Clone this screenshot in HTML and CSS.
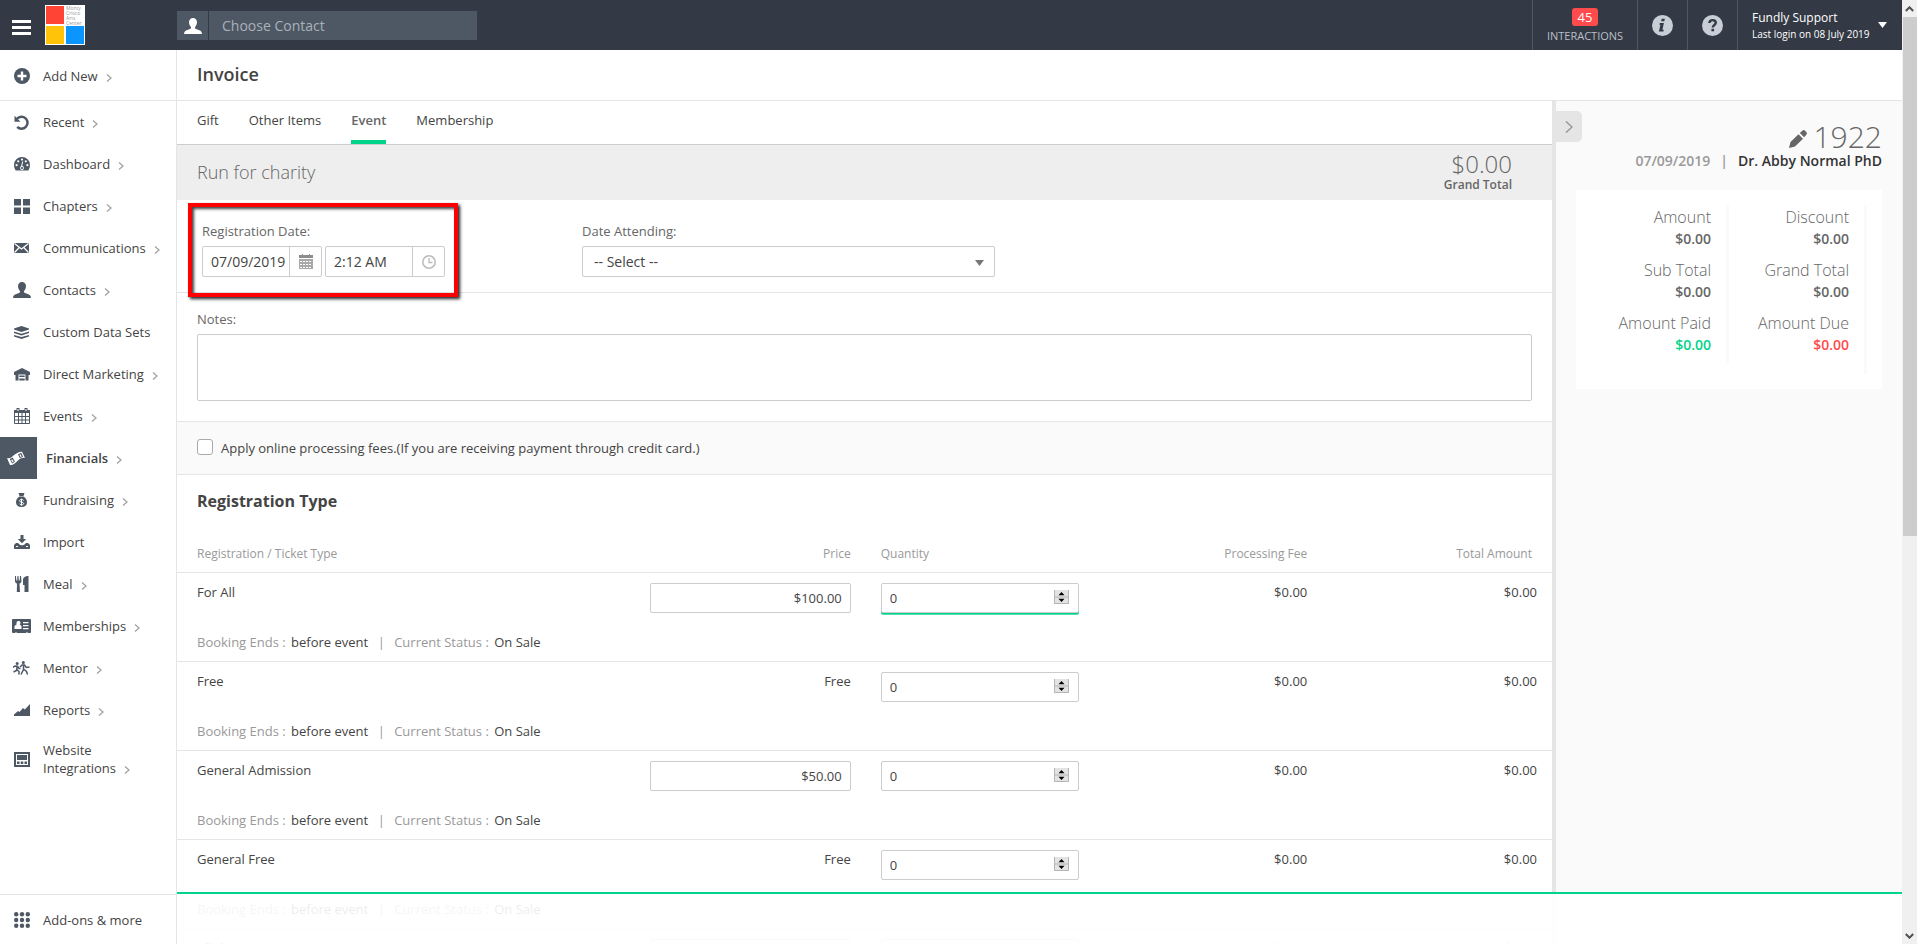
FILE: index.html
```html
<!DOCTYPE html>
<html lang="en">
<head>
<meta charset="utf-8">
<title>Invoice</title>
<meta name="viewport" content="width=device-width, initial-scale=1">
<link rel="stylesheet" href="styles.css">
</head>
<body>
<svg class="sprite" aria-hidden="true">
  <symbol id="person" viewBox="0 0 18 16"><path d="M9 0C11.400 0 13 1.700 13 4.200C13 6 12 8 11 9C10.800 10.200 11.200 10.700 12 11L15.300 12.200C17 12.800 17.700 13.800 18 16H0C.3 13.800 1 12.800 2.700 12.200L6 11C6.800 10.700 7.200 10.200 7 9C6 8 5 6 5 4.200C5 1.700 6.600 0 9 0z"/></symbol>
  <symbol id="chev" viewBox="0 0 6 8"><path d="M1 .5l4 3.500-4 3.500" fill="none" stroke="#a3a3a3" stroke-width="1.300"/></symbol>
  <symbol id="spin" viewBox="0 0 15 14"><path fill="#e3e3e3" d="M0 0h15v14H0z"/><path stroke="#b5b5b5" d="M.5 0v13.500h14V0M0 7h15" fill="none"/><path d="M7.500 2l3 3.200h-6zM7.500 12l3-3.200h-6z"/></symbol>
</svg>
<div class="app">
  <div class="page">
    <header class="topbar">
      <button class="burger" type="button" aria-label="Menu"><span></span><span></span><span></span></button>
      <a class="logo" href="#" aria-label="Home"><span class="sq red"></span><span class="sq name">Monty<br>Crisco<br>Arts<br>Center</span><span class="sq yellow"></span><span class="sq blue"></span></a>
      <form class="search">
        <label class="search-icon" for="contact" aria-label="Contact"><svg width="18" height="16"><use href="#person"/></svg></label>
        <input id="contact" type="text" placeholder="Choose Contact">
      </form>
      <nav class="top-actions">
        <a class="interactions" href="#"><span class="badge">45</span><span class="caption">INTERACTIONS</span></a>
        <a class="round" href="#" aria-label="Information"><svg width="21" height="21" viewBox="0 0 21 21"><circle cx="10.500" cy="10.500" r="10.500" fill="#c8ced6"/><path fill="#343a45" d="M9.700 3.700h3.200l-.6 2.600H9.100zM7.800 8h4.100l-1.500 6.800h1.400l-.4 1.800H6.900l1.500-6.800H7.400z"/></svg></a>
        <a class="round" href="#" aria-label="Help"><svg width="21" height="21" viewBox="0 0 21 21"><circle cx="10.500" cy="10.500" r="10.500" fill="#c8ced6"/><path fill="none" stroke="#343a45" stroke-width="2.400" d="M7.300 8c.2-2 1.500-2.900 3.300-2.900 2 0 3.200 1.100 3.200 2.700 0 2.200-3 2.200-3 4.700"/><path fill="#343a45" d="M9.400 13.800h2.700v2.500H9.400z"/></svg></a>
        <button class="account" type="button"><span class="who"><span class="user">Fundly Support</span><span class="login">Last login on 08 July 2019</span></span><svg width="10" height="6" viewBox="0 0 10 6"><path fill="#fff" d="M0 0h9L4.500 6z"/></svg></button>
      </nav>
    </header>
    <div class="body">
      <aside class="sidebar">
        <a class="item add" href="#"><span class="ico"><svg width="16" height="16" viewBox="0 0 16 16"><circle cx="8" cy="8" r="8"/><path stroke="#fff" stroke-width="2.400" d="M8 3.500v9M3.500 8h9"/></svg></span><span class="txt">Add New<svg class="chev"><use href="#chev"/></svg></span></a>
        <nav class="menu">
          <a class="item" href="#"><span class="ico"><svg width="15" height="15" viewBox="0 0 15 15"><path d="M3 3.800A6 6 0 1 1 3.200 11.900" fill="none" stroke="#4d5864" stroke-width="2.500"/><path d="M.5.800v6h6z"/></svg></span><span class="txt">Recent<svg class="chev"><use href="#chev"/></svg></span></a>
          <a class="item" href="#"><span class="ico"><svg width="16" height="14" viewBox="0 0 16 14"><path d="M8 0a8 8 0 0 1 8 8c0 2.200-.7 4-1.700 5.500H1.700A9 9 0 0 1 0 8a8 8 0 0 1 8-8z"/><g fill="#fff"><circle cx="8" cy="2.600" r="1.100"/><circle cx="4.200" cy="4.300" r="1.100"/><circle cx="11.800" cy="4.300" r="1.100"/><circle cx="2.600" cy="8.200" r="1.100"/><circle cx="13.400" cy="8.200" r="1.100"/><circle cx="8" cy="11" r="1.900"/></g><path d="M7.200 11l1.500-6.500" stroke="#fff" stroke-width="1"/><circle cx="8" cy="11" r="1.100"/></svg></span><span class="txt">Dashboard<svg class="chev"><use href="#chev"/></svg></span></a>
          <a class="item" href="#"><span class="ico"><svg width="16" height="15" viewBox="0 0 16 15"><path d="M0 0h7v6.500H0zM9 0h7v6.500H9zM0 8.500h7V15H0zM9 8.500h7V15H9z"/></svg></span><span class="txt">Chapters<svg class="chev"><use href="#chev"/></svg></span></a>
          <a class="item" href="#"><span class="ico"><svg width="15" height="10" viewBox="0 0 15 10"><path d="M0 0h15v10H0z"/><path d="M.5.500l7 5.500 7-5.500M.5 9.500L5.300 4.500M14.500 9.500L9.700 4.500" fill="none" stroke="#fff" stroke-width="1.200"/></svg></span><span class="txt">Communications<svg class="chev"><use href="#chev"/></svg></span></a>
          <a class="item" href="#"><span class="ico"><svg width="18" height="16"><use href="#person"/></svg></span><span class="txt">Contacts<svg class="chev"><use href="#chev"/></svg></span></a>
          <a class="item" href="#"><span class="ico"><svg width="15" height="13" viewBox="0 0 15 13"><path d="M7.500 0L15 2.600v.8L7.500 6 0 3.400v-.8z"/><path d="M0 5.500l7.500 2.200L15 5.500v1.600L7.500 9.600 0 7.100zM0 8.900l7.500 2.200L15 8.900v1.600L7.500 13 0 10.500z"/></svg></span><span class="txt">Custom Data Sets</span></a>
          <a class="item" href="#"><span class="ico"><svg width="16" height="13" viewBox="0 0 16 13"><path d="M8 0l8 4v3h-1.500v5.500h-3V6.500h-7v6h-3V7H0V4z"/><path d="M5.300 7.500h5.400V9H5.300zM5.300 10.500h5.400v2H5.300z"/></svg></span><span class="txt">Direct Marketing<svg class="chev"><use href="#chev"/></svg></span></a>
          <a class="item" href="#"><span class="ico"><svg width="16" height="16" viewBox="0 0 16 16"><path d="M.5 2.500h15v13H.5z" fill="none" stroke="#4d5864"/><path d="M0 2h16v3H0z"/><path d="M4.500 5v11M8 5v11M11.500 5v11M0 8.500h16M0 12h16" stroke="#4d5864"/><path d="M2.500 0h3v3.500h-3zM10.500 0h3v3.500h-3z"/><path d="M4 1v2M12 1v2" stroke="#fff"/></svg></span><span class="txt">Events<svg class="chev"><use href="#chev"/></svg></span></a>
          <a class="item active" href="#"><span class="ico"><svg width="18" height="15" viewBox="0 0 18 15"><path fill="#fff" d="M0 7c3 1 4.500-.8 6.500-2.500S12.500.500 15 .800L18 7c-3-.6-5 .8-7.500 3S6 14.500 3 14z"/><path fill="#4d5864" d="M2.800 8l2.800-1.500L8 10.800 5.100 12.500zM11 3.400l3.200-1.600 1.900 4-3.200 1.400z"/><path d="M4.600 8.600l1.600 2.500M12.900 3.700l1.400 2.200" stroke="#fff" stroke-width="1.300"/></svg></span><span class="txt">Financials<svg class="chev"><use href="#chev"/></svg></span></a>
          <a class="item" href="#"><span class="ico"><svg width="11" height="14" viewBox="0 0 11 14"><path d="M2.500 0h6L7.500 3h-4zM3.300 3.500h4.400C9.700 4.800 11 7 11 9.300 11 12.500 9 14 5.500 14S0 12.500 0 9.300C0 7 1.300 4.800 3.300 3.500z"/><path d="M7.600 7.500c-.4-.8-1.200-1-2.100-1-1.200 0-2 .5-2 1.300 0 1.900 4.200.8 4.200 2.700 0 .9-.9 1.300-2.100 1.300-1 0-1.900-.3-2.200-1.200M5.500 5.700v7" fill="none" stroke="#fff"/></svg></span><span class="txt">Fundraising<svg class="chev"><use href="#chev"/></svg></span></a>
          <a class="item" href="#"><span class="ico"><svg width="16" height="14" viewBox="0 0 16 14"><path d="M6.500 0h3v4h2.700L8 8.200 3.800 4h2.700z"/><path d="M0 10l2-2h2L5.500 9.500c1 1 4 1 5 0L12 8h2L16 10v3c0 .6-.4 1-1 1H1c-.6 0-1-.4-1-1z"/><path d="M2 11.500h2M12 11.500h2" stroke="#fff"/></svg></span><span class="txt">Import</span></a>
          <a class="item" href="#"><span class="ico"><svg width="14" height="16" viewBox="0 0 14 16"><path d="M0 0h1l.3 4.500h.9L2.500 0h1l.3 4.500h.9L5 0h1l.5 5C6.500 6.500 5.500 7.300 4.500 7.600L5 16H1.800L2 7.600C1 7.300 0 6.500 0 5zM13.500 0v16H9.500V9H8V4c0-2.500 2.500-4 5.500-4z"/></svg></span><span class="txt">Meal<svg class="chev"><use href="#chev"/></svg></span></a>
          <a class="item" href="#"><span class="ico"><svg width="19" height="14" viewBox="0 0 19 14"><path d="M1 0h17q1 0 1 1v12q0 1-1 1h-2l-1-1-1 1H5l-1-1-1 1H1q-1 0-1-1V1q0-1 1-1z"/><path fill="#fff" d="M4.500 4a2 2 0 1 1 3.200 1.500L9.500 7v3H2.500V7l2-1.500zM11 3h5.500v1.200H11zM11 6h5.500v1.200H11zM11 9h5.500v1.200H11z"/></svg></span><span class="txt">Memberships<svg class="chev"><use href="#chev"/></svg></span></a>
          <a class="item" href="#"><span class="ico"><svg width="17" height="14" viewBox="0 0 17 14"><circle cx="4.200" cy="2.500" r="1.500"/><circle cx="10.300" cy="1.500" r="1.500"/><path d="M0 6.500l2-1.500 2.500.3L6 7.500h1.500M4.200 5.500L3.500 9.500l-3 1.500M3.700 8.500L6 10.500v3M7 6l2-2h2.500l1.800 2.500L16.500 6M10.500 4.500V8.500L8 13.500M10.500 8l3 2.500 1 3" fill="none" stroke="#4d5864" stroke-width="1.500"/></svg></span><span class="txt">Mentor<svg class="chev"><use href="#chev"/></svg></span></a>
          <a class="item" href="#"><span class="ico"><svg width="16" height="12" viewBox="0 0 16 12"><path d="M0 12v-1.500L4 7l1.500 1L9 4l1.800 1.500L16 0v12z"/></svg></span><span class="txt">Reports<svg class="chev"><use href="#chev"/></svg></span></a>
          <a class="item two" href="#"><span class="ico"><svg width="16" height="15" viewBox="0 0 16 15"><path d="M1 1h14v13H1z" fill="none" stroke="#4d5864" stroke-width="2"/><path d="M3 3h10v5H3zM3 9.500h2.500V12H3zM6.700 9.500h2.600V12H6.700zM10.500 9.500H13V12h-2.500z"/></svg></span><span class="txt">Website<br>Integrations<svg class="chev"><use href="#chev"/></svg></span></a>
        </nav>
        <a class="item addons" href="#"><span class="ico"><svg width="16" height="16" viewBox="0 0 16 16"><circle cx="2.200" cy="2.200" r="2.200"/><circle cx="8" cy="2.200" r="2.200"/><circle cx="13.800" cy="2.200" r="2.200"/><circle cx="2.200" cy="8" r="2.200"/><circle cx="8" cy="8" r="2.200"/><circle cx="13.800" cy="8" r="2.200"/><circle cx="2.200" cy="13.800" r="2.200"/><circle cx="8" cy="13.800" r="2.200"/><circle cx="13.800" cy="13.800" r="2.200"/></svg></span><span class="txt">Add-ons &amp; more</span></a>
      </aside>
      <div class="content">
        <div class="title-row"><h1>Invoice</h1></div>
        <div class="columns">
          <main class="main">
            <nav class="tabs"><a href="#">Gift</a><a href="#">Other Items</a><a class="current" href="#">Event</a><a href="#">Membership</a></nav>
            <section class="banner"><h2>Run for charity</h2><div class="grand"><span class="sum">$0.00</span><span class="cap">Grand Total</span></div></section>
            <section class="dates">
              <div class="field reg">
                <label for="regdate">Registration Date:</label>
                <div class="pair">
                  <div class="combo"><input id="regdate" type="text" value="07/09/2019"><button type="button" aria-label="Pick date"><svg width="14" height="15" viewBox="0 0 14 15"><path fill="#8c8c8c" d="M0 1h3V0h1v1h6V0h1v1h3v3H0z"/><path fill="#a8a8a8" d="M0 5h14v10H0z"/><path d="M1 7.500h12M1 10.500h12M1 13.500h12" stroke="#fff" stroke-dasharray="2 1"/></svg></button></div>
                  <div class="combo"><input type="text" value="2:12 AM" aria-label="Registration time"><button type="button" aria-label="Pick time"><svg width="14" height="14" viewBox="0 0 14 14"><circle cx="7" cy="7" r="6.200" fill="none" stroke="#bbb" stroke-width="1.500"/><path d="M7 3v4.500h3.500" fill="none" stroke="#bbb" stroke-width="1.300"/></svg></button></div>
                </div>
                <span class="highlight"></span>
              </div>
              <div class="field attend">
                <label for="attend">Date Attending:</label>
                <div class="select"><select id="attend"><option>-- Select --</option></select><svg width="9" height="6" viewBox="0 0 9 6"><path fill="#777" d="M0 0h9L4.500 6z"/></svg></div>
              </div>
            </section>
            <section class="notes"><label for="notes">Notes:</label><textarea id="notes"></textarea></section>
            <section class="fees"><input id="fees" type="checkbox"><label for="fees">Apply online processing fees.(If you are receiving payment through credit card.)</label></section>
            <h3>Registration Type</h3>
            <table class="tickets">
              <colgroup><col class="c-name"><col class="c-price"><col class="c-qty"><col class="c-fee"><col class="c-total"></colgroup>
              <thead><tr><th>Registration / Ticket Type</th><th class="r">Price</th><th class="q">Quantity</th><th class="r">Processing Fee</th><th class="r last">Total Amount</th></tr></thead>
              <tbody>
                <tr class="row"><td>For All</td><td class="r"><input class="price" type="text" value="$100.00" aria-label="Price, For All"></td><td class="q"><div class="qty focus"><input type="number" value="0" aria-label="Quantity, For All"><svg width="15" height="14"><use href="#spin"/></svg></div></td><td class="r">$0.00</td><td class="r last">$0.00</td></tr>
                <tr class="info"><td colspan="5"><i>Booking Ends :</i> <b>before event</b> <em>|</em> <i>Current Status :</i> <b>On Sale</b></td></tr>
              </tbody>
              <tbody>
                <tr class="row"><td>Free</td><td class="r">Free</td><td class="q"><div class="qty"><input type="number" value="0" aria-label="Quantity, Free"><svg width="15" height="14"><use href="#spin"/></svg></div></td><td class="r">$0.00</td><td class="r last">$0.00</td></tr>
                <tr class="info"><td colspan="5"><i>Booking Ends :</i> <b>before event</b> <em>|</em> <i>Current Status :</i> <b>On Sale</b></td></tr>
              </tbody>
              <tbody>
                <tr class="row"><td>General Admission</td><td class="r"><input class="price" type="text" value="$50.00" aria-label="Price, General Admission"></td><td class="q"><div class="qty"><input type="number" value="0" aria-label="Quantity, General Admission"><svg width="15" height="14"><use href="#spin"/></svg></div></td><td class="r">$0.00</td><td class="r last">$0.00</td></tr>
                <tr class="info"><td colspan="5"><i>Booking Ends :</i> <b>before event</b> <em>|</em> <i>Current Status :</i> <b>On Sale</b></td></tr>
              </tbody>
              <tbody>
                <tr class="row"><td>General Free</td><td class="r">Free</td><td class="q"><div class="qty"><input type="number" value="0" aria-label="Quantity, General Free"><svg width="15" height="14"><use href="#spin"/></svg></div></td><td class="r">$0.00</td><td class="r last">$0.00</td></tr>
                <tr class="info"><td colspan="5"><i>Booking Ends :</i> <b>before event</b> <em>|</em> <i>Current Status :</i> <b>On Sale</b></td></tr>
              </tbody>
              <tbody>
                <tr class="row"><td>All day</td><td class="r"><input class="price" type="text" value="$50.00" aria-label="Price, All day"></td><td class="q"><div class="qty"><input type="number" value="0" aria-label="Quantity, All day"></div></td><td class="r">$0.00</td><td class="r last">$0.00</td></tr>
              </tbody>
            </table>
          </main>
          <aside class="summary">
            <button class="collapse" type="button" aria-label="Collapse"><svg width="8" height="12" viewBox="0 0 8 12"><path d="M1 .5l6 5.500-6 5.500" fill="none" stroke="#999" stroke-width="1.500"/></svg></button>
            <div class="number"><svg width="18" height="18" viewBox="0 0 18 18"><path fill="#666" d="M0 18l1.500-6L9.500 4.200l4.500 4.500L6 16.500zM10.800 3l2.500-2.300c.8-.8 2-.8 2.800 0l1.200 1.200c.8.8.8 2 0 2.800L15.200 7.300z"/></svg><span>1922</span></div>
            <div class="meta"><span>07/09/2019</span><em>|</em><strong>Dr. Abby Normal PhD</strong></div>
            <div class="card">
              <dl><dt>Amount</dt><dd>$0.00</dd><dt>Sub Total</dt><dd>$0.00</dd><dt>Amount Paid</dt><dd class="paid">$0.00</dd></dl>
              <dl class="tall"><dt>Discount</dt><dd>$0.00</dd><dt>Grand Total</dt><dd>$0.00</dd><dt>Amount Due</dt><dd class="due">$0.00</dd></dl>
            </div>
          </aside>
        </div>
        <div class="bottom-bar"></div>
      </div>
    </div>
  </div>
  <div class="scrollbar" aria-hidden="true">
    <span class="arrow"><svg width="9" height="6" viewBox="0 0 9 6"><path d="M.8 5l3.700-3.700L8.200 5" fill="none" stroke="#505050" stroke-width="2"/></svg></span>
    <span class="thumb"></span>
    <span class="arrow end"><svg width="9" height="6" viewBox="0 0 9 6"><path d="M.8 1l3.700 3.700L8.200 1" fill="none" stroke="#505050" stroke-width="2"/></svg></span>
  </div>
</div>
</body>
</html>
```
FILE: styles.css
```css
* { box-sizing: border-box; }
body {
  margin: 0;
  font: 13px/18px "Open Sans", "Noto Sans", sans-serif;
  color: #444;
  background: #fff;
}
a { color: inherit; text-decoration: none; }
button { font: inherit; border: 0; padding: 0; background: none; color: inherit; }
input, select, textarea { font: inherit; color: #444; border-radius: 2px; }
h1, h2, h3, dl, dd { margin: 0; }
svg { flex: none; display: block; }
.sprite { position: absolute; width: 0; height: 0; }

.app { display: flex; height: 100vh; overflow: hidden; }
.page { flex: 1; min-width: 0; display: flex; flex-direction: column; }

/* Top bar */
.topbar { flex: none; height: 50px; display: flex; align-items: center; background: #343a45; color: #fff; }
.burger { margin-left: 12px; width: 19px; display: flex; flex-direction: column; gap: 3px; margin-top: 4px; }
.burger span { height: 3px; background: #fff; }
.logo { margin-left: 14px; width: 40px; height: 40px; padding: 1px; display: grid; grid-template-columns: 18px 18px; grid-template-rows: 18px 18px; gap: 2px; background: #fff; }
.red { background: #ff4436; }
.yellow { background: #ffc409; }
.blue { background: #0a95ff; }
.name { font-size: 5px; line-height: 5px; color: #999; }
.search { margin: 1px 0 0 92px; width: 300px; height: 29px; display: flex; gap: 1px; }
.search-icon { width: 31px; display: flex; align-items: center; justify-content: center; background: #4d5864; fill: #fff; }
.search input { flex: 1; min-width: 0; border: 0; border-radius: 0; padding: 0 13px; background: #4d5864; font-size: 14px; color: #fff; }
.search input::placeholder { color: #a9b1ba; opacity: 1; }
.top-actions { margin-left: auto; align-self: stretch; display: flex; }
.top-actions > * { border-left: 1px solid #4d5864; }
.interactions { width: 105px; display: flex; flex-direction: column; align-items: center; padding-top: 8px; gap: 2px; }
.badge { background: #ff4b4b; border-radius: 3px; padding: 0 6px; line-height: 18px; }
.caption { font-size: 11px; line-height: 16px; color: #b9bfc7; }
.round { width: 50px; display: flex; align-items: center; justify-content: center; }
.account { width: 165px; display: flex; align-items: center; gap: 8px; padding-left: 14px; text-align: left; }
.who { display: flex; flex-direction: column; padding-top: 2px; }
.user { font-size: 12px; line-height: 16px; }
.login { font-size: 10px; line-height: 16px; }

/* Sidebar */
.body { flex: 1; min-height: 0; display: flex; }
.sidebar { flex: none; width: 177px; border-right: 1px solid #e5e5e5; display: flex; flex-direction: column; }
.item { display: flex; align-items: center; min-height: 42px; }
.ico { width: 43px; display: flex; justify-content: center; fill: #4d5864; }
.chev { display: inline-block; width: 6px; height: 8px; margin-left: 8px; vertical-align: -1px; }
.add { min-height: 51px; border-bottom: 1px solid #e5e5e5; padding-top: 2px; }
.menu { flex: 1; min-height: 0; }
.active { font-weight: 600; }
.active .ico { width: 37px; height: 42px; align-items: center; background: #4d5864; margin-right: 9px; padding-right: 6px; }
.two { min-height: 56px; }
.addons { min-height: 50px; border-top: 1px solid #e5e5e5; }

/* Content */
.content { flex: 1; min-width: 0; display: flex; flex-direction: column; position: relative; }
.title-row { flex: none; height: 51px; display: flex; align-items: center; padding: 0 20px 2px; border-bottom: 1px solid #e5e5e5; }
h1 { font-size: 18px; line-height: 24px; font-weight: 600; }
.columns { flex: 1; min-height: 0; display: flex; }
.main { flex: 1; min-width: 0; overflow: hidden; }
.tabs { height: 44px; display: flex; gap: 30px; padding: 0 20px; border-bottom: 1px solid #ccc; }
.tabs a { padding-top: 10px; height: 43px; }
.tabs .current { border-bottom: 4px solid #00d48a; }
.current { color: #666; font-weight: 600; }
.banner { min-height: 55px; display: flex; align-items: center; justify-content: space-between; padding: 0 40px 2px 20px; background: #eee; color: #666; }
h2 { font-size: 18px; font-weight: 300; line-height: 24px; }
.grand { display: flex; flex-direction: column; align-items: flex-end; }
.sum { font-size: 24px; line-height: 26px; font-weight: 300; }
.cap { font-size: 12px; line-height: 16px; font-weight: 600; }
.dates { display: flex; gap: 137px; padding: 22px 25px 15px; border-bottom: 1px solid #e5e5e5; }
.field { display: flex; flex-direction: column; gap: 6px; color: #666; }
.reg { position: relative; }
.pair { display: flex; gap: 3px; }
.combo { width: 120px; height: 31px; display: flex; border: 1px solid #ccc; border-radius: 2px; }
.combo input { flex: 1; min-width: 0; border: 0; padding: 0 0 0 8px; font-size: 14px; }
.combo button { width: 32px; display: flex; align-items: center; justify-content: center; border-left: 1px solid #ccc; }
.highlight { position: absolute; inset: -19px -13px -20px -14px; border: 4px solid #f00; box-shadow: 2px 2px 3px #222, inset 2px 2px 3px #444; pointer-events: none; }
.select { position: relative; width: 413px; }
.select select { appearance: none; width: 100%; height: 31px; border: 1px solid #ccc; background: #fff; padding: 0 11px; font-size: 14px; }
.select svg { position: absolute; right: 11px; top: 14px; pointer-events: none; }
.notes { display: flex; flex-direction: column; gap: 6px; padding: 17px 20px 20px; color: #666; border-bottom: 1px solid #e5e5e5; }
.notes textarea { width: 100%; height: 67px; border: 1px solid #ccc; resize: none; display: block; }
.fees { height: 53px; display: flex; align-items: center; gap: 8px; padding-left: 20px; background: #fafafa; border-bottom: 1px solid #e5e5e5; }
.fees input { appearance: none; width: 16px; height: 16px; margin: 0 0 2px; border: 1px solid #aaa; border-radius: 3px; background: #fff; }
h3 { font-size: 16px; line-height: 24px; font-weight: 700; padding: 14px 20px 33px; }
.tickets { width: 100%; table-layout: fixed; border-collapse: separate; border-spacing: 0; }
.c-name { width: 34.4%; }
.c-price { width: 14.6%; }
.c-qty { width: 16.6%; }
.c-fee { width: 16.6%; }
th, td { padding: 0; text-align: left; vertical-align: top; font-weight: 400; }
th { font-size: 12px; line-height: 16px; padding-bottom: 10px; color: #999; border-bottom: 1px solid #e5e5e5; }
th:first-child, td:first-child { padding-left: 20px; }
.r { text-align: right; }
.q { padding-left: 30px; }
th.last { padding-right: 20px; }
td.last { padding-right: 15px; }
.row td { height: 50px; padding-top: 10px; }
.info td { height: 39px; padding-top: 10px; border-bottom: 1px solid #e5e5e5; }
.info i { font-style: normal; color: #999; }
.info b { font-weight: 400; margin-left: 2px; }
.info em { font-style: normal; color: #999; margin: 0 6px; }
.price, .qty input { display: block; width: 100%; height: 30px; border: 1px solid #ccc; padding: 0 8px; }
.price { text-align: right; }
.qty { position: relative; }
.qty input { appearance: textfield; }
.qty input::-webkit-inner-spin-button { appearance: none; }
.focus input { box-shadow: 0 1px 0 #00d48a, 0 2px 0 #4ddfab; }
.qty svg { position: absolute; right: 10px; top: 7px; pointer-events: none; }

/* Summary */
.summary { flex: none; width: 350px; border-left: 4px solid #e5e5e5; background: #fafafa; padding: 20px 20px 0; position: relative; }
.collapse { position: absolute; left: 0; top: 10px; width: 26px; height: 31px; display: flex; align-items: center; justify-content: center; background: #e5e5e5; border-radius: 0 5px 5px 0; }
.number { display: flex; justify-content: flex-end; align-items: center; gap: 7px; font-size: 30px; line-height: 32px; font-weight: 300; color: #666; }
.number svg { margin-top: 4px; }
.meta { display: flex; justify-content: flex-end; gap: 10px; font-size: 14px; line-height: 16px; font-weight: 600; color: #999; }
.meta em { font-style: normal; }
.meta strong { font-weight: 600; color: #333; }
.card { margin-top: 21px; height: 199px; padding: 15px 15px 0 0; display: flex; justify-content: flex-end; background: #fff; text-align: right; }
.card dl { width: 138px; height: 159px; padding-right: 15px; border-right: 3px solid #fafafa; white-space: nowrap; }
.card .tall { height: 169px; }
dt { font-size: 16px; line-height: 24px; font-weight: 300; color: #666; }
dd { font-size: 14px; line-height: 20px; font-weight: 600; color: #666; padding-bottom: 9px; }
.paid { color: #00d48a; }
.due { color: #ff4b4b; }

/* Translucent action bar over the bottom of the page */
.bottom-bar { position: absolute; left: 0; right: 0; bottom: 0; height: 52px; border-top: 2px solid #00d48a; background: rgba(255, 255, 255, .9); background-clip: padding-box; }

/* Page scroll bar */
.scrollbar { flex: none; width: 15px; background: #f0f0f0; display: flex; flex-direction: column; }
.arrow { height: 17px; display: flex; align-items: center; justify-content: center; }
.thumb { height: 55%; background: #cdcdcd; margin-left: 1px; }
.end { margin-top: auto; }
```
